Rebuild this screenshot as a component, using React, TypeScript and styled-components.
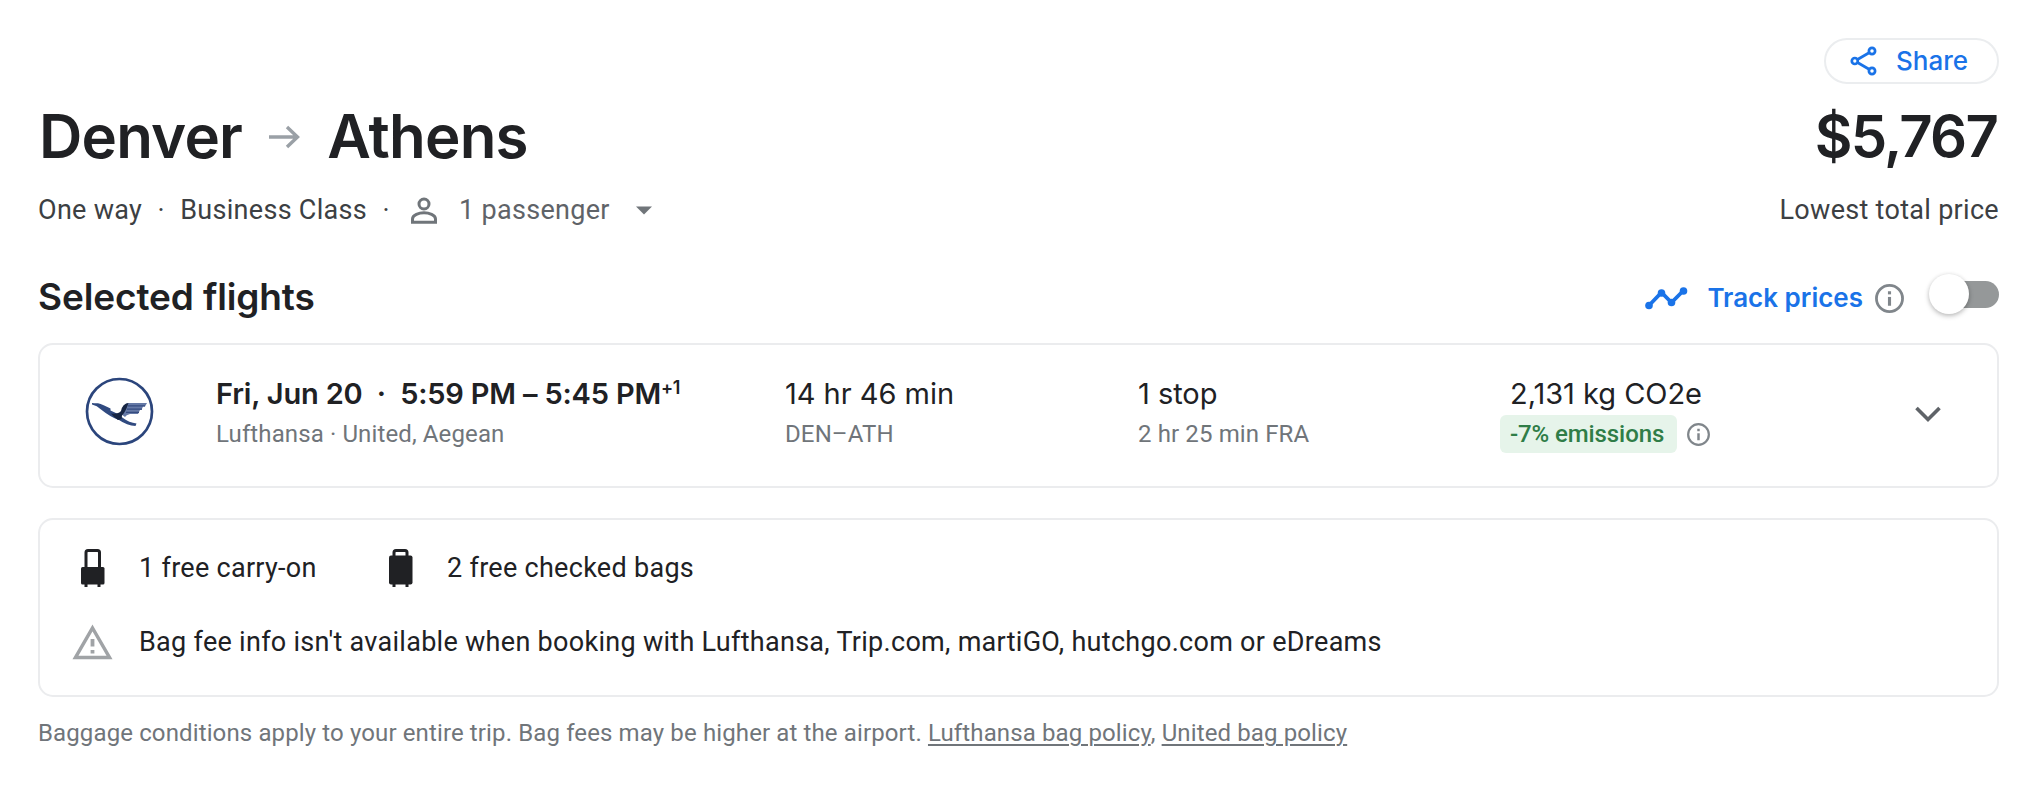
import React from "react";
import styled, { createGlobalStyle } from "styled-components";

const Global = createGlobalStyle`
  * { box-sizing: border-box; }
  body { margin: 0; background: #fff; }
  svg { display: block; flex: none; }
`;

const display = `Inter, "Open Sans", sans-serif`;
const body = `Roboto, "Liberation Sans", sans-serif`;

const Page = styled.main`
  display: flex;
  flex-direction: column;
  width: 2040px;
  height: 786px;
  padding: 38px 41px 0 38px;
  background: #fff;
  color: #202124;
  font-family: ${body};
  overflow: hidden;
`;

const Header = styled.header`
  display: flex;
  justify-content: space-between;
  align-items: flex-end;
  height: 190px;
`;

const Column = styled.div<{ $end?: boolean }>`
  display: flex;
  flex-direction: column;
  align-items: ${(p) => (p.$end ? "flex-end" : "flex-start")};
`;

const Route = styled.h1`
  display: flex;
  align-items: center;
  margin: 0 0 20px 1px;
  font: 600 60px/72px ${display};
  letter-spacing: -0.8px;
`;

const ArrowSlot = styled.span`
  display: flex;
  padding: 1px 26px 0 27px;
`;

const Meta = styled.div`
  display: flex;
  align-items: center;
  height: 36px;
  color: #3c4043;
  font-size: 27px;
  line-height: 36px;
  letter-spacing: 0.3px;
`;

const Dot = styled.span`
  width: 38px;
  text-align: center;
`;

const Passengers = styled.button`
  display: flex;
  align-items: center;
  padding: 0 0 0 6px;
  border: 0;
  background: none;
  color: #5f6368;
  font: inherit;
  letter-spacing: inherit;
`;

const PassengerLabel = styled.span`
  margin: 0 26px 0 22px;
`;

const ShareButton = styled.button`
  display: flex;
  align-items: center;
  gap: 18px;
  width: 175px;
  height: 46px;
  padding: 0 0 0 24px;
  border: 2px solid #ebedef;
  border-radius: 24px;
  background: #fff;
  color: #1a73e8;
  font: 500 26px/40px ${display};
`;

const Price = styled.div`
  margin: 16px 2px 20px 0;
  font: 600 58px/72px ${display};
  letter-spacing: -1.8px;
`;

const SectionBar = styled.div`
  display: flex;
  justify-content: space-between;
  align-items: center;
  height: 46px;
  margin: 45px 0 24px;
`;

const SectionTitle = styled.h2`
  margin: 2px 0 0;
  font: 600 37px/46px ${display};
  letter-spacing: -0.13px;
`;

const Track = styled.div`
  display: flex;
  align-items: center;
  color: #1a73e8;
  padding-top: 4px;
`;

const TrackLabel = styled.span`
  margin: 0 12px 0 19px;
  font: 600 26px/46px ${display};
  letter-spacing: 0;
`;

const Toggle = styled.span`
  display: flex;
  align-items: center;
  justify-content: flex-end;
  width: 70px;
  height: 40px;
  margin: 0 0 8px 25px;
  position: relative;
`;

const ToggleRail = styled.span`
  width: 58px;
  height: 27px;
  border-radius: 14px;
  background: #959899;
`;

const ToggleThumb = styled.span`
  position: absolute;
  left: 0;
  top: 0;
  width: 40px;
  height: 40px;
  border-radius: 50%;
  background: #fff;
  box-shadow: 0 2px 5px rgba(0, 0, 0, 0.25), 0 0 4px rgba(0, 0, 0, 0.06);
`;

const Card = styled.section`
  border: 2px solid #ebecee;
  border-radius: 15px;
  background: #fff;
`;

const FlightCard = styled(Card)`
  display: grid;
  grid-template-columns: 176px 569px 353px 362px 1fr auto;
  height: 145px;
  padding: 28px 56px 0 0;
`;

const LogoSlot = styled.div`
  padding: 4px 0 0 45px;
`;

const Primary = styled.div<{ $strong?: boolean; $inset?: boolean }>`
  height: 40px;
  margin-bottom: 2px;
  padding: 1px 0 0 ${(p) => (p.$inset ? "10px" : 0)};
  font: ${(p) => (p.$strong ? 600 : 400)} 29px/40px ${display};
  letter-spacing: ${(p) => (p.$strong ? "-0.18px" : "-0.03px")};
  white-space: pre;
`;

const NextDay = styled.sup`
  display: inline-block;
  font-size: 18px;
  line-height: 1;
  vertical-align: 10px;
  letter-spacing: -0.5px;
`;

const Secondary = styled.div`
  color: #70757a;
  font-size: 24px;
  line-height: 38px;
  letter-spacing: 0.12px;
`;

const EmissionRow = styled.div`
  display: flex;
  align-items: center;
  gap: 10px;
`;

const EmissionBadge = styled.span`
  width: 177px;
  height: 38px;
  padding-left: 10px;
  border-radius: 6px;
  background: #e6f4ea;
  color: #2f7d47;
  font-size: 24px;
  font-weight: 500;
  line-height: 39px;
  letter-spacing: -0.1px;
`;

const ExpandSlot = styled.div`
  padding-top: 33px;
`;

const BagCard = styled(Card)`
  display: flex;
  flex-direction: column;
  gap: 34px;
  height: 179px;
  margin-top: 30px;
  padding: 28px 0 0 32px;
`;

const BagRow = styled.div`
  display: flex;
`;

const BagItem = styled.div<{ $width?: number }>`
  display: flex;
  align-items: center;
  gap: 26px;
  width: ${(p) => (p.$width ? `${p.$width}px` : "auto")};
  font-size: 27px;
  line-height: 40px;
  letter-spacing: 0.29px;
  white-space: nowrap;
`;

const Footnote = styled.p`
  margin: 18px 0 0;
  color: #70757a;
  font-size: 24px;
  line-height: 36px;
  letter-spacing: 0.125px;
`;

const PolicyLink = styled.a`
  color: inherit;
  text-decoration: underline;
  text-decoration-thickness: 2px;
  text-underline-offset: 3px;
`;

const ArrowIcon = () => (
  <svg width="32" height="24" viewBox="0 0 32 24" fill="none" stroke="#9aa0a6" strokeWidth="3.400">
    <path d="M0 12H29M18 2L28.500 12L18 22" />
  </svg>
);

const PersonIcon = () => (
  <svg width="26" height="27" viewBox="0 0 26 27" fill="none" stroke="#70757a" strokeWidth="3">
    <circle cx="13" cy="7" r="5" />
    <path d="M1.500 25.200V22C1.500 18 8 15.800 13 15.800S24.500 18 24.500 22V25.200Z" />
  </svg>
);

const CaretIcon = () => (
  <svg width="16" height="9" viewBox="0 0 16 9">
    <path d="M0 0.500H16L8 8.500Z" fill="#70757a" />
  </svg>
);

const ShareIcon = () => (
  <svg width="28" height="30" viewBox="0 0 28 30" fill="none" stroke="#1a73e8" strokeWidth="2.700">
    <path d="M7.500 13.500L19.500 6.500M7.500 16.500L19.500 23.500" />
    <circle cx="4.800" cy="15" r="3" />
    <circle cx="22" cy="5" r="3.100" />
    <circle cx="22" cy="25" r="3.100" />
  </svg>
);

const TrendIcon = () => (
  <svg width="44" height="26" viewBox="0 0 44 26" fill="#1a73e8">
    <path d="M4 21.500L17.500 7.500L27.500 17.500L39.500 5.500" fill="none" stroke="#1a73e8" strokeWidth="3.800" />
    <circle cx="5" cy="20.500" r="3.800" />
    <circle cx="17.500" cy="8" r="3.800" />
    <circle cx="27.500" cy="17.500" r="3.800" />
    <circle cx="39.500" cy="6" r="3.800" />
  </svg>
);

const InfoIcon = ({ size }: { size: number }) => (
  <svg width={size} height={size} viewBox="0 0 28 28" fill="#80868b">
    <circle cx="14" cy="14" r="12.600" fill="none" stroke="#80868b" strokeWidth="2.700" />
    <rect x="12.500" y="12.500" width="3" height="8.500" />
    <rect x="12.500" y="7" width="3" height="3" />
  </svg>
);

const CraneLogo = () => (
  <svg width="69" height="69" viewBox="0 0 69 69">
    <circle cx="34.500" cy="34.500" r="32.500" fill="#fff" stroke="#2b457c" strokeWidth="2.700" />
    <path d="M36 37L39 30Q40 26 43.500 26H62L60 29.500H58L56.500 33H55L53 37H45Q41 38 40 40Z" fill="#6579a6" />
    <path d="M43 28.800H60M42 32.200H57M41 35.400H54" stroke="#344b80" strokeWidth="1.200" />
    <path d="M7 26Q10 26.500 13 26.300Q18 27.500 25.500 31.500V33.500L33 37L38 41Q44 45.500 51.500 46.500L50.500 49Q42 48.500 34 43Q26 40.500 16 32.500Q12 28.500 7 27.500Z" fill="#304a80" />
    <path d="M26 36.500Q33 37.500 36 34Q37.500 26.500 43.500 26Q42.500 29 41 32.500Q39 36.500 37 38.500L36.500 42L33 43Q29 40.500 26 36.500Z" fill="#162543" />
  </svg>
);

const ChevronIcon = () => (
  <svg width="26" height="17" viewBox="0 0 26 17" fill="none" stroke="#5f6368" strokeWidth="3.600">
    <path d="M1.500 2L13 13.500L24.500 2" />
  </svg>
);

const CarryOnIcon = () => (
  <svg width="41" height="40" viewBox="0 0 41 40" fill="#202124">
    <path d="M14 19V4.500Q14 2.500 16 2.500H25.500Q27.500 2.500 27.500 4.500V19" fill="none" stroke="#202124" strokeWidth="3" />
    <rect x="9" y="19" width="23.500" height="17.500" rx="1.500" />
    <rect x="12.500" y="36" width="3" height="3" />
    <rect x="25.500" y="36" width="3" height="3" />
  </svg>
);

const SuitcaseIcon = () => (
  <svg width="41" height="40" viewBox="0 0 41 40" fill="#202124">
    <path d="M14 8V4.500Q14 2.500 16 2.500H25Q27 2.500 27 4.500V8" fill="none" stroke="#202124" strokeWidth="3" />
    <rect x="9" y="7.500" width="23.500" height="29" rx="2" />
    <rect x="12.500" y="36" width="3" height="3" />
    <rect x="25.500" y="36" width="3" height="3" />
  </svg>
);

const WarningIcon = () => (
  <svg width="41" height="37" viewBox="0 0 41 37" fill="#a0a3a6">
    <path d="M20.500 4L37.500 33.500H3.500Z" fill="none" stroke="#a0a3a6" strokeWidth="3.500" />
    <rect x="18.600" y="15" width="3.800" height="7.500" />
    <rect x="18.600" y="26" width="3.800" height="3.500" />
  </svg>
);

export default function App() {
  return (
    <>
      <Global />
      <Page>
        <Header>
          <Column>
            <Route>
              Denver
              <ArrowSlot><ArrowIcon /></ArrowSlot>
              Athens
            </Route>
            <Meta>
              <span>One way</span>
              <Dot>·</Dot>
              <span>Business Class</span>
              <Dot>·</Dot>
              <Passengers>
                <PersonIcon />
                <PassengerLabel>1 passenger</PassengerLabel>
                <CaretIcon />
              </Passengers>
            </Meta>
          </Column>
          <Column $end>
            <ShareButton><ShareIcon />Share</ShareButton>
            <Price>$5,767</Price>
            <Meta>Lowest total price</Meta>
          </Column>
        </Header>

        <SectionBar>
          <SectionTitle>Selected flights</SectionTitle>
          <Track>
            <TrendIcon />
            <TrackLabel>Track prices</TrackLabel>
            <InfoIcon size={29} />
            <Toggle>
              <ToggleRail />
              <ToggleThumb />
            </Toggle>
          </Track>
        </SectionBar>

        <FlightCard>
          <LogoSlot><CraneLogo /></LogoSlot>
          <div>
            <Primary $strong>
              {"Fri, Jun 20  ·  5:59 PM – 5:45 PM"}
              <NextDay>+1</NextDay>
            </Primary>
            <Secondary>Lufthansa · United, Aegean</Secondary>
          </div>
          <div>
            <Primary>14 hr 46 min</Primary>
            <Secondary>DEN–ATH</Secondary>
          </div>
          <div>
            <Primary>1 stop</Primary>
            <Secondary>2 hr 25 min FRA</Secondary>
          </div>
          <Column>
            <Primary $inset>2,131 kg CO2e</Primary>
            <EmissionRow>
              <EmissionBadge>-7% emissions</EmissionBadge>
              <InfoIcon size={23} />
            </EmissionRow>
          </Column>
          <ExpandSlot><ChevronIcon /></ExpandSlot>
        </FlightCard>

        <BagCard>
          <BagRow>
            <BagItem $width={308}><CarryOnIcon />1 free carry-on</BagItem>
            <BagItem><SuitcaseIcon />2 free checked bags</BagItem>
          </BagRow>
          <BagItem>
            <WarningIcon />
            Bag fee info isn't available when booking with Lufthansa, Trip.com, martiGO, hutchgo.com or eDreams
          </BagItem>
        </BagCard>

        <Footnote>
          Baggage conditions apply to your entire trip. Bag fees may be higher at the airport.{" "}
          <PolicyLink>Lufthansa bag policy</PolicyLink>, <PolicyLink>United bag policy</PolicyLink>
        </Footnote>
      </Page>
    </>
  );
}
